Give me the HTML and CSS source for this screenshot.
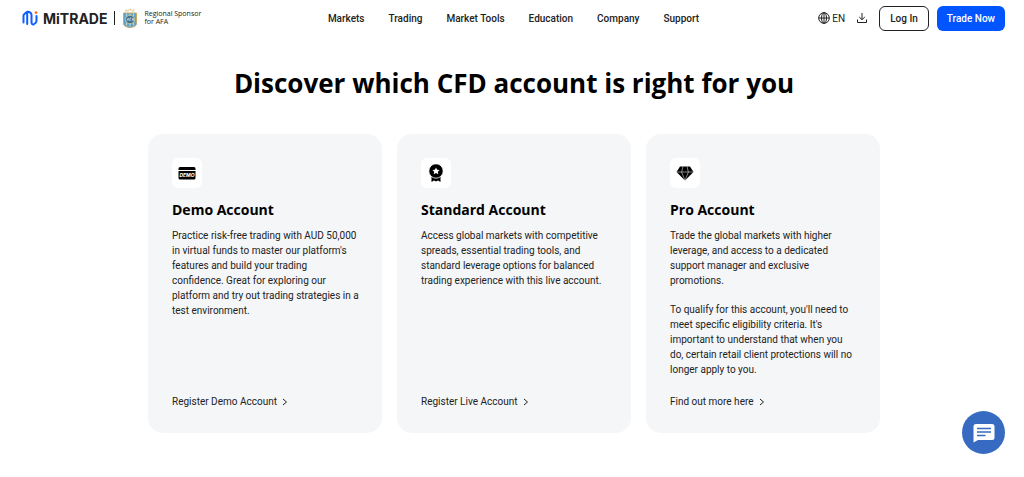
FILE: index.html
```html
<!DOCTYPE html>
<html lang="en">
<head>
  <meta charset="UTF-8" />
  <meta name="viewport" content="width=device-width, initial-scale=1.0"/>
  <title>Mitrade - CFD Accounts</title>
  <link rel="stylesheet" href="styles.css">
</head>
<body>

  <header>
    <a class="logo" href="#" aria-label="Mitrade">
      <svg class="logo-mark" viewBox="0 0 16 16" width="16" height="16" fill="none" stroke="#0f5fff" stroke-width="2" stroke-linecap="round" stroke-linejoin="round">
        <path d="M1.500 12.500V5.500Q1.500 4 5.200 1.800V14M5.200 1.800Q9.500 2 9.500 5V12.500Q9.700 15 12 14.200 14.500 13 14.500 11V6"/>
        <circle cx="14" cy="2.600" r="1.400" fill="#ff6a2a" stroke="none"/>
      </svg>
      <span class="logo-text">MiTRADE</span>
      <span class="logo-line"></span>
      <svg class="crest" viewBox="0 0 16 20" width="16" height="20">
        <path d="M3 3.200l1.400-1 1 .9L8 1.400l2.600 1.700 1-.9 1.400 1" fill="none" stroke="#e3c88c" stroke-width="1.300" stroke-dasharray="2 1"/>
        <path d="M1.500 5h13v10.500q0 3.300-6.500 4-6.500-.7-6.500-4z" fill="#5fa3c4" stroke="#c4a867" stroke-width="1"/>
        <path d="M4.500 5.500v12M8 5.500v13M11.500 5.500v12" stroke="#a9d4e6" stroke-width="1.200"/>
        <ellipse cx="8" cy="11.500" rx="4.600" ry="4.200" fill="#3c7393" stroke="#d6c08b" stroke-width=".9"/>
        <path d="M5 13l1.200-3 1.200 3M8 13v-3h1.500M10 13l1-3 1 3" fill="none" stroke="#d8e8ee" stroke-width=".7"/>
      </svg>
      <span class="sponsor">Regional Sponsor<br>for AFA</span>
    </a>
    <nav>
      <a href="#">Markets</a>
      <a href="#">Trading</a>
      <a href="#">Market Tools</a>
      <a href="#">Education</a>
      <a href="#">Company</a>
      <a href="#">Support</a>
    </nav>
    <div class="actions">
      <button class="lang-btn">
        <svg viewBox="0 0 12 12" width="12" height="12" fill="none" stroke="#222" stroke-width="1">
          <circle cx="6" cy="6" r="5.300"/>
          <ellipse cx="6" cy="6" rx="2.500" ry="5.300"/>
          <path d="M.7 6h10.600M6 .7v10.600"/>
        </svg>
        EN
      </button>
      <button class="download-btn" aria-label="Download">
        <svg viewBox="0 0 12 12" width="12" height="12" fill="none" stroke="#222" stroke-width="1">
          <path d="M6 1v6.500M3.200 5L6 7.700 8.800 5M1.500 7.500v3h9v-3"/>
        </svg>
      </button>
      <button class="login-btn">Log In</button>
      <button class="trade-btn">Trade Now</button>
    </div>
  </header>

  <main>
    <h1>Discover which CFD account is right for you</h1>

    <div class="container">
      <div class="card">
        <div class="card-icon">
          <svg viewBox="0 0 18 18" width="18" height="18">
            <path d="M2 3h14a1.500 1.500 0 0 1 1.500 1.500V6H.5V4.500A1.500 1.500 0 0 1 2 3z"/>
            <path d="M.5 7h17v7a1.500 1.500 0 0 1-1.500 1.500H2A1.500 1.500 0 0 1 .5 14z"/>
            <text class="demo-label" x="9" y="13" text-anchor="middle">DEMO</text>
          </svg>
        </div>
        <h2>Demo Account</h2>
        <p>Practice risk-free trading with AUD 50,000 in virtual funds to master our platform's features and build your trading confidence. Great for exploring our platform and try out trading strategies in a test environment.</p>
        <a class="card-link" href="#">Register Demo Account
          <svg viewBox="0 0 6 8" width="6" height="8"><path d="M1 1l3.500 3L1 7"/></svg>
        </a>
      </div>
      <div class="card">
        <div class="card-icon">
          <svg viewBox="0 0 18 18" width="18" height="18">
            <path d="M4.500 12h9v6L11 16.500 9 17.500 7 16.500 4.500 18z"/>
            <circle cx="9" cy="7" r="7.200" stroke="#fff" stroke-width=".8"/>
            <path d="M9 3.400l1.100 2.300 2.500.3-1.800 1.700.5 2.500L9 9l-2.300 1.200.5-2.500L5.400 6l2.500-.3z" fill="#fff"/>
          </svg>
        </div>
        <h2>Standard Account</h2>
        <p>Access global markets with competitive spreads, essential trading tools, and standard leverage options for balanced trading experience with this live account.</p>
        <a class="card-link" href="#">Register Live Account
          <svg viewBox="0 0 6 8" width="6" height="8"><path d="M1 1l3.500 3L1 7"/></svg>
        </a>
      </div>
      <div class="card">
        <div class="card-icon">
          <svg viewBox="0 0 18 18" width="18" height="18">
            <path d="M4 2.500h10L17.500 8 9 16.500.5 8z"/>
            <path d="M.5 8h17M7 2.500L5.600 8 9 16.500 12.400 8 11 2.500" fill="none" stroke="#fff" stroke-width=".5"/>
          </svg>
        </div>
        <h2>Pro Account</h2>
        <p>Trade the global markets with higher leverage, and access to a dedicated support manager and exclusive promotions.</p>
        <p>To qualify for this account, you'll need to meet specific eligibility criteria. It's important to understand that when you do, certain retail client protections will no longer apply to you.</p>
        <a class="card-link" href="#">Find out more here
          <svg viewBox="0 0 6 8" width="6" height="8"><path d="M1 1l3.500 3L1 7"/></svg>
        </a>
      </div>
    </div>
  </main>

  <button class="chat-btn" aria-label="Chat">
    <svg viewBox="0 0 22 20" width="22" height="20">
      <path d="M3 1h16q2.500 0 2.500 2.500v11q0 2.500-2.500 2.500H5L.5 19.500v-16Q.5 1 3 1z" fill="#fff"/>
      <path d="M4 5.500h14M4 9h14M4 12.500h8.500" stroke="#366bc1" stroke-width="1.600"/>
    </svg>
  </button>

</body>
</html>
```

FILE: styles.css
```css
body {
  margin: 0;
  font-family: Roboto, sans-serif;
  font-size: 10px;
  background: #fff;
  color: #222;
}
a {
  color: inherit;
  text-decoration: none;
}
button {
  font-family: inherit;
  color: inherit;
  background: none;
  border: none;
  padding: 0;
  cursor: pointer;
}
header {
  display: grid;
  grid-template-columns: 1fr auto 1fr;
  align-items: center;
  height: 36px;
  padding: 0 19px 0 22px;
}
.logo {
  display: flex;
  align-items: center;
}
.logo-text {
  font-family: Inter, sans-serif;
  font-size: 14px;
  font-weight: 700;
  margin-left: 5px;
}
.logo-line {
  width: 1px;
  height: 14px;
  background: #222;
  margin: 0 7px;
}
.sponsor {
  font-family: 'Open Sans', sans-serif;
  font-size: 7px;
  line-height: 8px;
  margin-left: 6px;
}
nav {
  display: flex;
  gap: 24px;
  font-size: 10px;
  font-weight: 500;
}
.actions {
  display: flex;
  align-items: center;
  justify-content: flex-end;
}
.lang-btn {
  display: flex;
  align-items: center;
  gap: 2px;
  font-size: 10px;
}
.download-btn {
  display: flex;
  margin: 0 11px;
}
.login-btn,
.trade-btn {
  height: 25px;
  padding: 0 10px;
  border-radius: 6px;
  font-size: 10px;
  font-weight: 500;
}
.login-btn {
  border: 1px solid #222;
}
.trade-btn {
  background: #0055ff;
  color: #fff;
  margin-left: 8px;
}

main {
  padding: 27px 16px 44px 20px;
}
h1,
h2 {
  color: #000;
  font-family: 'Open Sans', sans-serif;
}
h1 {
  margin: 0;
  font-size: 26px;
  line-height: 40px;
  text-align: center;
}
.container {
  max-width: 732px;
  margin: 31px auto 0;
  display: grid;
  grid-template-columns: repeat(3, 1fr);
  gap: 15px;
}

.card {
  display: flex;
  flex-direction: column;
  align-items: flex-start;
  padding: 24px 22px 24px 24px;
  border-radius: 15px;
  background: #f4f6f8;
}
.card-icon {
  display: flex;
  align-items: center;
  justify-content: center;
  width: 30px;
  height: 30px;
  border-radius: 6px;
  background: #fff;
}
.demo-label {
  font-family: Inter, sans-serif;
  font-size: 5px;
  font-style: italic;
  font-weight: 700;
  fill: #fff;
}
h2 {
  margin: 12px 0 8px;
  font-size: 14px;
  line-height: 20px;
}
.card p {
  margin: 0;
  font-size: 10px;
  line-height: 15px;
}
.card p + p {
  margin-top: 14px;
}
.card-link {
  display: flex;
  align-items: center;
  gap: 5px;
  margin-top: auto;
  font-size: 10px;
  line-height: 15px;
}
.card p + .card-link {
  padding-top: 17px;
}
.card-link svg {
  fill: none;
  stroke: #222;
}

.chat-btn {
  position: fixed;
  right: 19px;
  bottom: 23px;
  display: flex;
  align-items: center;
  justify-content: center;
  width: 43px;
  height: 43px;
  border-radius: 50%;
  background: #366bc1;
}
```
